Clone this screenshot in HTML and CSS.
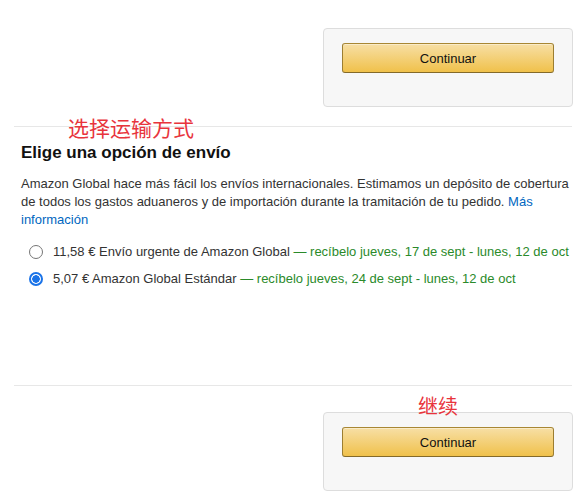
FILE: index.html
```html
<!DOCTYPE html>
<html lang="es">
<head>
<meta charset="utf-8">
<link rel="stylesheet" href="styles.css">
</head>
<body>
<div class="page">
  <div class="box-row top-row">
    <div class="box">
      <button class="btn">Continuar</button>
    </div>
  </div>
  <div class="divider first-divider">
    <span class="note note-ship">选择运输方式</span>
  </div>
  <div class="section">
    <h2 class="title">Elige una opción de envío</h2>
    <p class="desc">Amazon Global hace más fácil los envíos internacionales. Estimamos un depósito de cobertura de todos los gastos aduaneros y de importación durante la tramitación de tu pedido. <a class="link" href="#">Más información</a></p>
    <div class="options">
      <label class="option">
        <span class="radio"></span>
        <span class="opt-text">11,58 € Envío urgente de Amazon Global <span class="eta">— recíbelo jueves, 17 de sept - lunes, 12 de oct</span></span>
      </label>
      <label class="option">
        <span class="radio checked"></span>
        <span class="opt-text">5,07 € Amazon Global Estándar <span class="eta">— recíbelo jueves, 24 de sept - lunes, 12 de oct</span></span>
      </label>
    </div>
  </div>
  <div class="divider second-divider"></div>
  <div class="box-row bottom-row">
    <span class="note note-continue">继续</span>
    <div class="box">
      <button class="btn">Continuar</button>
    </div>
  </div>
</div>
</body>
</html>
```

FILE: styles.css
```css
html, body {
  margin: 0;
  padding: 0;
  background: #fff;
}
.page {
  position: relative;
  width: 588px;
  height: 500px;
  font-family: "Liberation Sans", Arial, sans-serif;
  font-size: 13px;
  color: #111;
  overflow: hidden;
}
.box-row {
  position: relative;
  display: flex;
  justify-content: flex-end;
  padding-right: 15px;
}
.top-row {
  padding-top: 28px;
}
.bottom-row {
  padding-top: 26px;
}
.box {
  box-sizing: border-box;
  width: 250px;
  height: 79px;
  padding: 14px 18px 0 18px;
  background: #f7f7f7;
  border: 1px solid #dddddd;
  border-radius: 4px;
}
.btn {
  display: block;
  box-sizing: border-box;
  width: 212px;
  height: 30px;
  margin: 0;
  padding: 0;
  font-family: "Liberation Sans", Arial, sans-serif;
  font-size: 13px;
  color: #111;
  background: linear-gradient(to bottom, #f7dfa5, #f0c14b);
  border: 1px solid;
  border-color: #a88734 #9c7e31 #846a29;
  border-radius: 3px;
  box-shadow: inset 0 1px 0 rgba(255,255,255,0.4);
}
.divider {
  position: relative;
  height: 1px;
  margin-left: 14px;
  margin-right: 16px;
  background: #e7e7e7;
}
.first-divider {
  margin-top: 19px;
}
.second-divider {
  margin-top: 0;
}
.note {
  position: absolute;
  font-family: "Noto Sans CJK SC", sans-serif;
  color: #e8343c;
  line-height: 1;
  white-space: nowrap;
}
.note-ship {
  left: 54px;
  top: -9px;
  font-size: 21px;
}
.note-continue {
  left: 418px;
  top: 10px;
  font-size: 20px;
}
.section {
  padding-left: 21px;
  padding-right: 16px;
  height: 243px;
}
.title {
  margin: 15px 0 0 0;
  font-size: 17px;
  font-weight: bold;
  line-height: 22px;
  color: #111;
}
.desc {
  margin: 11px 0 0 0;
  line-height: 18px;
  color: #333;
}
.link {
  color: #0066c0;
  text-decoration: none;
}
.options {
  margin-top: 14px;
  padding-left: 8px;
  display: flex;
  flex-direction: column;
  gap: 9px;
}
.option {
  display: flex;
  align-items: center;
  gap: 10px;
  line-height: 18px;
  color: #333;
}
.radio {
  box-sizing: border-box;
  width: 14px;
  height: 14px;
  border: 1px solid #767676;
  border-radius: 50%;
  background: #fff;
  flex: none;
}
.radio.checked {
  border: 2px solid #1a73e8;
  background: radial-gradient(circle, #1a73e8 0 3.5px, #fff 4px);
}
.eta {
  color: #2a8a2a;
}
```
